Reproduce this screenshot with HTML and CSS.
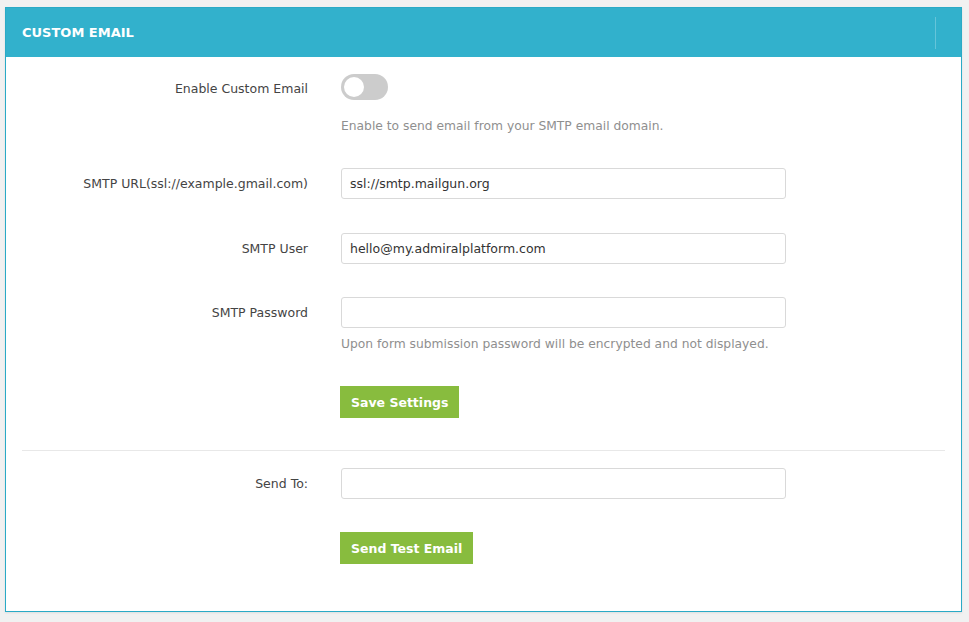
FILE: index.html
```html
<!DOCTYPE html>
<html>
<head>
    <title>Custom Email</title>
    <meta charset="utf-8"/>
    <link rel="stylesheet" href="styles.css">
</head>
<body>
<div class="panel">
    <div class="panel-heading">
        <span class="panel-title">CUSTOM EMAIL</span>
        <span class="panel-tools"></span>
    </div>
    <div class="panel-body">
        <div class="form-row row-toggle">
            <label class="form-label">Enable Custom Email</label>
            <div class="form-field">
                <span class="switch"><span class="knob"></span></span>
                <p class="help help-toggle">Enable to send email from your SMTP email domain.</p>
            </div>
        </div>
        <div class="form-row row-wide">
            <label class="form-label" for="smtp_url">SMTP URL(ssl://example.gmail.com)</label>
            <div class="form-field">
                <input type="text" id="smtp_url" class="form-input" value="ssl://smtp.mailgun.org">
            </div>
        </div>
        <div class="form-row">
            <label class="form-label" for="smtp_user">SMTP User</label>
            <div class="form-field">
                <input type="text" id="smtp_user" class="form-input" value="hello@my.admiralplatform.com">
            </div>
        </div>
        <div class="form-row">
            <label class="form-label" for="smtp_password">SMTP Password</label>
            <div class="form-field">
                <input type="password" id="smtp_password" class="form-input">
                <p class="help">Upon form submission password will be encrypted and not displayed.</p>
            </div>
        </div>
        <div class="form-row row-tight">
            <span class="form-label"></span>
            <div class="form-field">
                <button class="btn">Save Settings</button>
            </div>
        </div>
        <hr class="divider">
        <div class="form-row">
            <label class="form-label" for="send_to">Send To:</label>
            <div class="form-field">
                <input type="text" id="send_to" class="form-input">
            </div>
        </div>
        <div class="form-row last">
            <span class="form-label"></span>
            <div class="form-field">
                <button class="btn">Send Test Email</button>
            </div>
        </div>
    </div>
</div>
</body>
</html>
```
FILE: styles.css
```css
body {
    font-family: "DejaVu Sans", Verdana, sans-serif;
    font-size: 12.5px;
    background-color: #f1f1f1;
    margin: 0;
    padding: 7px 7px 10px 5px;
    color: #444;
}

.panel {
    background-color: #fff;
    border: 1px solid #2aaac6;
    box-shadow: 0 1px 2px rgba(0, 0, 0, 0.08);
}

.panel-heading {
    background-color: #32b1cc;
    height: 49px;
    display: flex;
    align-items: center;
    justify-content: space-between;
    padding: 0 25px 0 16px;
}

.panel-title {
    color: #fff;
    font-weight: bold;
    font-size: 13px;
}

.panel-tools {
    height: 32px;
    border-left: 1px solid rgba(255, 255, 255, 0.25);
}

.panel-body {
    padding: 17px 16px 47px 16px;
}

.form-row {
    display: grid;
    grid-template-columns: 286px 445px;
    column-gap: 33px;
    margin-bottom: 33px;
}

.form-row.row-wide {
    margin-bottom: 34px;
}

.form-row.row-tight {
    margin-bottom: 32px;
}

.form-row.last {
    margin-bottom: 0;
}

.form-label {
    text-align: right;
    line-height: 31px;
    color: #444;
}

.row-toggle .form-label {
    line-height: 29px;
}

.form-input {
    box-sizing: border-box;
    width: 100%;
    height: 31px;
    border: 1px solid #d9d9d9;
    border-radius: 3px;
    padding: 0 8px;
    font-family: inherit;
    font-size: 12.5px;
    color: #333;
    display: block;
}

.switch {
    display: block;
    width: 47px;
    height: 26px;
    border-radius: 13px;
    background-color: #ccc;
    position: relative;
}

.knob {
    position: absolute;
    left: 3px;
    top: 3px;
    width: 20px;
    height: 20px;
    border-radius: 50%;
    background-color: #fff;
}

.help {
    margin: 7px 0 0 0;
    line-height: 18px;
    font-size: 12.3px;
    color: #8f8f8f;
}

.help-toggle {
    margin-top: 17px;
}

.btn {
    background-color: #88bc3e;
    color: #fff;
    border: none;
    height: 32px;
    padding: 0 11px;
    font-family: inherit;
    font-size: 12.5px;
    font-weight: bold;
    cursor: pointer;
    margin-left: -1px;
}

.btn:hover {
    background-color: #7aab35;
}

.divider {
    border: none;
    border-top: 1px solid #e8e8e8;
    margin: 0 0 17px 0;
}
```
